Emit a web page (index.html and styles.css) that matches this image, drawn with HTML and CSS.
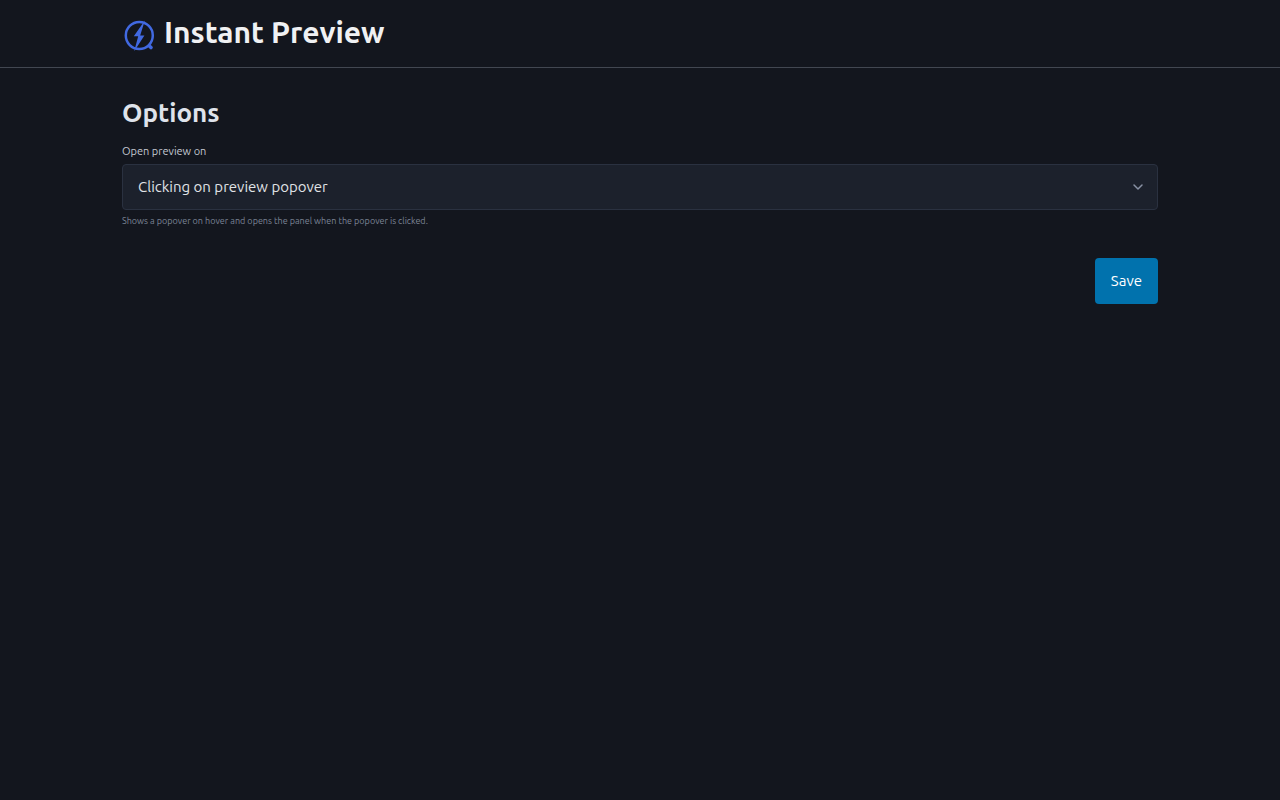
FILE: index.html
```html
<!DOCTYPE html>
<html lang="en">
<head>
<meta charset="utf-8">
<meta name="viewport" content="width=device-width, initial-scale=1">
<title>Instant Preview</title>
<link rel="stylesheet" href="styles.css">
</head>
<body>
<header class="header">
  <div class="container brand">
    <svg class="logo" viewBox="0 0 36 36" aria-hidden="true">
      <circle cx="17.3" cy="17.5" r="13.5"/>
      <path class="bolt" d="M22.8 2.5 11.8 18.2H16.2L12.2 33.2 22.4 17.6H18.2Z"/>
      <path class="tail" d="M27.6 28.2 29 29.6"/>
    </svg>
    <h1 class="title">Instant Preview</h1>
  </div>
</header>
<main class="container content">
  <h2 class="heading">Options</h2>
  <form class="form">
    <label class="label" for="trigger">Open preview on</label>
    <div class="field">
      <select class="select" id="trigger" aria-describedby="help">
        <option>Clicking on preview popover</option>
      </select>
      <svg class="chevron" viewBox="0 0 12 12" aria-hidden="true"><path d="M2 4 6 8 10 4"/></svg>
    </div>
    <p class="help" id="help">Shows a popover on hover and opens the panel when the popover is clicked.</p>
    <button class="save" type="submit">Save</button>
  </form>
</main>
</body>
</html>
```
FILE: styles.css
```css
* {
  box-sizing: border-box;
}

body {
  margin: 0;
  background: #13161e;
  color: #dfe3eb;
  font-family: Ubuntu, "Noto Sans", sans-serif;
  font-size: 15px;
}

.container {
  width: 100%;
  max-width: 1068px;
  margin: 0 auto;
  padding: 0 16px;
}

.header {
  padding: 12px 0;
  border-bottom: 1px solid #424751;
}

.brand {
  display: flex;
  align-items: flex-end;
  gap: 6px;
  height: 43px;
}

.logo {
  width: 36px;
  height: 36px;
  margin-bottom: 1px;
  fill: none;
  stroke: #4169e1;
  stroke-width: 2.5;
}

.logo .bolt {
  fill: #4169e1;
  stroke: none;
}

.logo .tail {
  stroke-width: 3.6;
  stroke-linecap: round;
}

.title {
  margin: 0 0 4px;
  color: #f0f1f3;
  font-size: 30px;
  font-weight: 700;
  line-height: 38px;
}

.content {
  padding-top: 28px;
}

.heading {
  margin: 0 0 13px;
  font-size: 26px;
  font-weight: 700;
  line-height: 34px;
}

.form {
  display: flex;
  flex-direction: column;
}

.label {
  margin-bottom: 5px;
  color: #c2c7d0;
  font-size: 11px;
  line-height: 16px;
}

.field {
  display: grid;
  align-items: center;
}

.select,
.chevron {
  grid-area: 1 / 1;
}

.select {
  width: 100%;
  height: 46px;
  padding: 0 40px 2px 15px;
  appearance: none;
  background: #1c212c;
  border: 1px solid #2a3140;
  border-radius: 4px;
  color: #e0e3e7;
  font: inherit;
}

.chevron {
  justify-self: end;
  width: 12px;
  height: 12px;
  margin-right: 14px;
  fill: none;
  stroke: #8891a4;
  stroke-width: 1.5;
  stroke-linecap: round;
  stroke-linejoin: round;
  pointer-events: none;
}

.help {
  margin: 5px 0 31px;
  color: #7b8495;
  font-size: 9px;
  line-height: 12px;
}

.save {
  align-self: flex-end;
  height: 46px;
  padding: 0 16px 2px;
  background: #0172ad;
  border: 0;
  border-radius: 4px;
  color: #fff;
  font: inherit;
}
```
